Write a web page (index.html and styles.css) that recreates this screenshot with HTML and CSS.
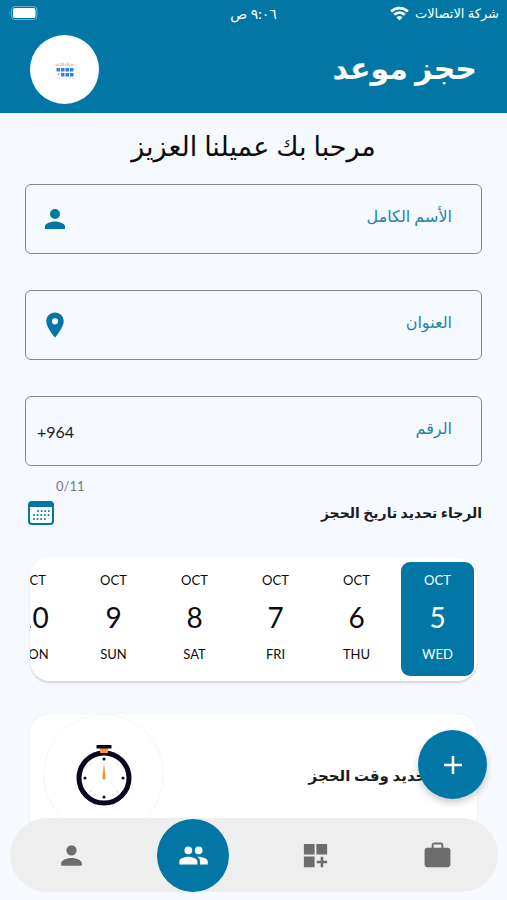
FILE: index.html
```html
<!DOCTYPE html>
<html lang="ar" dir="rtl">
<head>
<meta charset="utf-8">
<meta name="viewport" content="width=device-width, initial-scale=1">
<title>حجز موعد</title>
<link rel="stylesheet" href="styles.css">
</head>
<body>
<header class="top">
  <div class="status">
    <span class="carrier">شركة الاتصالات
      <svg class="wifi" viewBox="0 0 20 15"><path d="M1.200 5.500a12.500 12.500 0 0 1 17.600 0M4.400 8.900a8 8 0 0 1 11.200 0" fill="none" stroke="#fff" stroke-width="2.900"/><path d="M10 14.800l-3.200-3.200a4.600 4.600 0 0 1 6.400 0z" fill="#fff"/></svg>
    </span>
    <span class="time">٩:٠٦ ص</span>
    <svg class="battery" viewBox="0 0 30 14"><rect x="3.500" y=".5" width="25.500" height="13" rx="3.500" fill="none" stroke="#6db0cb"/><rect x="5" y="2" width="22.500" height="10" rx="2" fill="#fff"/><path d="M1.500 4.500Q.3 7 1.500 9.500z" fill="#6db0cb"/></svg>
  </div>
  <div class="bar">
    <h1>حجز موعد</h1>
    <div class="logo">
      <svg viewBox="0 0 20 18"><path d="M1 4.500V3m2 1.500v-2m3 2V2m2 2.500V1.500m3 3v-2m2 2V1.500m3 3v-2m2 2V3" stroke="#aaa6a8" stroke-width=".8"/><path d="M1 4.500h18" stroke="#c4c2c4" stroke-width=".6"/><path d="M1.500 7h3.500v3.500H1.500zM6 7h3.500v3.500H6zM10.500 7H14v3.500h-3.500zM15 7h3.500v3.500H15zM6 12h3.500v3.500H6zM10.500 12H14v3.500h-3.500zM15 12h3.500v3.500H15z" fill="#287ff0"/><circle cx="3.500" cy="13.500" r="1" fill="#6aa8f5"/><path d="M0 17h5m7 0h7" stroke="#cdd9ec" stroke-width=".8"/></svg>
    </div>
  </div>
</header>
<main>
  <h2>مرحبا بك عميلنا العزيز</h2>
  <form class="fields">
    <div class="field">
      <label for="name">الأسم الكامل</label><input id="name" type="text">
      <svg class="ico" viewBox="0 0 24 24"><path d="M12 12a4 4 0 1 0 0-8 4 4 0 0 0 0 8zm0 2c-2.670 0-8 1.340-8 4v2h16v-2c0-2.660-5.330-4-8-4z"/></svg>
    </div>
    <div class="field">
      <label for="address">العنوان</label><input id="address" type="text">
      <svg class="ico" viewBox="0 0 24 24"><path d="M12 2C8.130 2 5 5.130 5 9c0 5.250 7 13 7 13s7-7.750 7-13c0-3.870-3.130-7-7-7zm0 9.500a2.500 2.500 0 1 1 0-5 2.500 2.500 0 0 1 0 5z"/></svg>
    </div>
    <div class="field">
      <label for="phone">الرقم</label><input id="phone" type="tel" maxlength="11">
      <span class="code" dir="ltr">+964</span>
    </div>
  </form>
  <p class="count"><span dir="ltr">0/11</span></p>
  <div class="section">
    <h3>الرجاء تحديد تاريخ الحجز</h3>
    <svg class="cal" viewBox="0 0 26 24"><rect x="1" y="1" width="24" height="22" rx="3" fill="#fff" stroke="#0277a5" stroke-width="2"/><path d="M1 6V3.500A2.500 2.500 0 0 1 3.500 1h19A2.500 2.500 0 0 1 25 3.500V6z" fill="#0277a5"/><path d="M10 10h11M6 14h15M6 18h11" fill="none" stroke="#0277a5" stroke-width="2" stroke-linecap="round" stroke-dasharray="0 3.600"/></svg>
  </div>
  <div class="dates">
    <button class="day on"><span>OCT</span><b>5</b><span>WED</span></button>
    <button class="day"><span>OCT</span><b>6</b><span>THU</span></button>
    <button class="day"><span>OCT</span><b>7</b><span>FRI</span></button>
    <button class="day"><span>OCT</span><b>8</b><span>SAT</span></button>
    <button class="day"><span>OCT</span><b>9</b><span>SUN</span></button>
    <button class="day"><span>OCT</span><b>10</b><span>MON</span></button>
  </div>
  <section class="timecard">
    <h3>تحديد وقت الحجز</h3>
    <div class="dial">
      <svg viewBox="0 0 56 62"><circle cx="28" cy="34" r="25" fill="#fff" stroke="#0b0820" stroke-width="5"/><path d="M24 4h8v5h-8z" fill="#f29a38"/><path d="M20.500 1h15v3.500h-15z" fill="#0b0820"/><path d="M28 18l1.700 16a1.700 1.700 0 1 1-3.400 0z" fill="#f29a38"/><g fill="#0b0820"><circle cx="28" cy="15" r="1.500"/><circle cx="28" cy="53" r="1.500"/><circle cx="9" cy="34" r="1.500"/><circle cx="47" cy="34" r="1.500"/></g><g fill="#dedede"><circle cx="14.500" cy="20.500" r="1"/><circle cx="41.500" cy="20.500" r="1"/><circle cx="14.500" cy="47.500" r="1"/><circle cx="41.500" cy="47.500" r="1"/></g></svg>
    </div>
  </section>
</main>
<button class="fab" aria-label="إضافة"><svg viewBox="0 0 18 18"><path d="M9 0v18M0 9h18" stroke="#fff" stroke-width="2.500"/></svg></button>
<nav>
  <a href="#work" aria-label="الأعمال"><svg viewBox="0 0 24 24"><path fill-rule="evenodd" d="M20 6h-3.500V4c0-1.110-.89-2-2-2h-5c-1.110 0-2 .89-2 2v2H4c-1.110 0-2 .89-2 2v11c0 1.110.89 2 2 2h16c1.110 0 2-.89 2-2V8c0-1.110-.89-2-2-2zm-5 0H9V3.500h6z"/></svg></a>
  <a href="#services" aria-label="الخدمات"><svg viewBox="0 0 24 24"><path d="M3 3h8.300v8.300H3zm9.700 0H21v8.300h-8.300zM3 12.700h8.300V21H3zM16 13h2v3h3v2h-3v3h-2v-3h-3v-2h3z"/></svg></a>
  <a class="on" href="#clients" aria-label="العملاء"><svg viewBox="0 0 24 24"><path d="M16 11a3 3 0 1 0 0-6 3 3 0 0 0 0 6zm-8 0a3 3 0 1 0 0-6 3 3 0 0 0 0 6zm0 2c-2.330 0-7 1.170-7 3.500V19h14v-2.500c0-2.330-4.670-3.500-7-3.500zm8 0c-.29 0-.62.02-.97.05 1.160.84 1.970 1.970 1.970 3.450V19h6v-2.500c0-2.330-4.670-3.500-7-3.500z"/></svg></a>
  <a href="#profile" aria-label="الحساب"><svg viewBox="0 0 24 24"><path d="M12 12a4 4 0 1 0 0-8 4 4 0 0 0 0 8zm0 2c-2.670 0-8 1.340-8 4v2h16v-2c0-2.660-5.330-4-8-4z"/></svg></a>
</nav>
</body>
</html>
```
FILE: styles.css
```css
* { box-sizing: border-box; }
body { margin: 0; min-height: 100vh; background: #f6f9fe; color: #1b1c20; font-family: Lato, "DejaVu Sans", sans-serif; }
h1, h2, h3, p { margin: 0; }
svg { display: block; }
button { border: 0; padding: 0; font: inherit; cursor: pointer; }

.top { background: #0277a5; color: #fff; height: 113px; }
.status { display: grid; grid-template-columns: 1fr auto 1fr; align-items: center; height: 26px; padding: 0 8px; font-size: 13px; }
.carrier { display: flex; align-items: center; gap: 6px; white-space: nowrap; }
.wifi { width: 19px; height: 15px; }
.time { font-size: 14px; }
.battery { width: 30px; height: 14px; justify-self: end; }
.bar { display: flex; justify-content: space-between; align-items: flex-start; padding: 9px 30px 0; }
h1 { font-size: 30px; line-height: 64px; font-weight: 700; }
.logo { display: grid; place-items: center; width: 69px; height: 69px; border-radius: 50%; background: #fff; }
.logo svg { width: 20px; height: 18px; }

main { padding: 0 25px; }
h2 { padding: 8px 0 14px; text-align: center; font-size: 27px; line-height: 49px; font-weight: 400; color: #0c0c0e; }
.fields { display: grid; gap: 36px; }
.field { display: flex; align-items: center; height: 70px; padding: 0 29px 0 14px; border: 1px solid #85888c; border-radius: 6px; }
.field label { padding-bottom: 6px; font-size: 16px; color: #2383ab; }
.field input { flex: 1; min-width: 0; height: 40px; border: 0; background: none; outline: 0; font: inherit; font-size: 16px; }
.ico { width: 30px; height: 30px; fill: #0277a5; }
.field:last-child { padding-left: 11px; }
.code { font-size: 16px; }
.count { padding: 10px 0 0 31px; text-align: left; font-size: 13px; line-height: 20px; color: #75787c; }
.section { display: flex; align-items: center; justify-content: space-between; height: 34px; padding-left: 3px; }
h3 { font-size: 15px; line-height: 28px; font-weight: 700; }
.section h3 { font-size: 14px; }
.cal { width: 26px; height: 24px; }

.dates { display: flex; gap: 8px; margin: 28px 5px 0; padding: 4px 3px 5px; overflow: hidden; border-radius: 20px; background: #fff; box-shadow: 0 2px 2px #d4d6da; }
.day { display: flex; flex: none; flex-direction: column; align-items: center; gap: 8px; width: 73px; height: 114px; padding: 8px 0; border-radius: 9px; background: none; color: #0c0c0e; }
.day span { font-size: 13px; line-height: 20px; }
.day b { font-size: 28px; line-height: 38px; font-weight: 400; }
.day.on { background: #0277a5; color: #fff; }

.timecard { display: flex; align-items: center; justify-content: space-between; margin: 33px 5px 0; padding: 0 45px 0 13px; border-radius: 20px; background: #fff; box-shadow: 0 0 2px #e4e7ec; }
.dial { display: grid; place-items: center; width: 121px; height: 121px; border: 1px solid #f5f6f7; border-radius: 50%; }
.dial svg { width: 56px; height: 62px; }

.fab { position: fixed; right: 20px; bottom: 101px; display: grid; place-items: center; width: 69px; height: 69px; border-radius: 50%; background: #0277a5; box-shadow: 0 4px 7px #0003; }
.fab svg { width: 18px; height: 18px; }
nav { position: fixed; right: 9px; bottom: 8px; left: 10px; display: grid; grid-template-columns: repeat(4, 1fr); place-items: center; height: 74px; border-radius: 37px; background: #eee; }
nav a { display: grid; place-items: center; width: 72px; height: 73px; border-radius: 50%; }
nav svg { width: 31px; height: 31px; fill: #6d6d6d; }
nav .on { background: #0277a5; }
nav .on svg { fill: #fff; }
```
